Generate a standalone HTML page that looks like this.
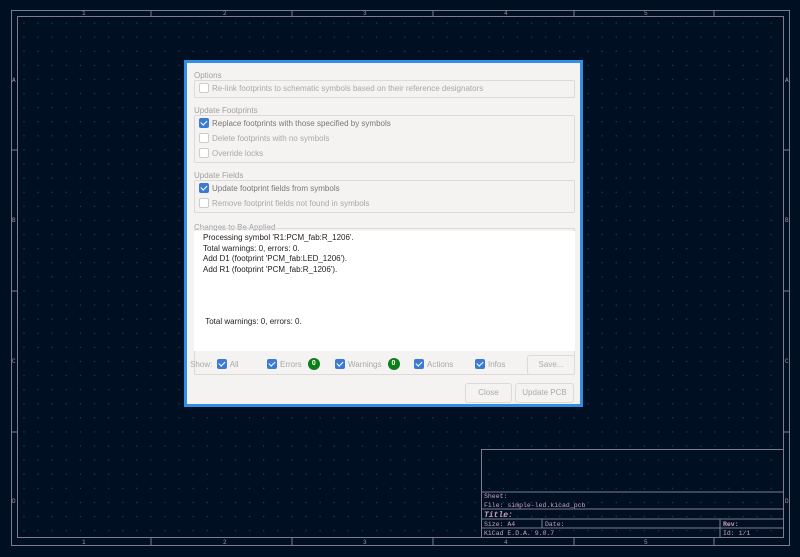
<!DOCTYPE html>
<html><head><meta charset="utf-8"><style>
body{margin:0;width:800px;height:557px;background:#001023;overflow:hidden;position:relative;font-family:"Liberation Sans",sans-serif}
svg{position:absolute;left:0;top:0}
#dlg{position:absolute;left:184px;top:60px;width:393px;height:341px;border:3px solid #3090e6;background:#f5f3f2;font-size:8px;color:#a8a8a8}
.gl{position:absolute;left:7px;font-size:8px;color:#a0a0a0}
.box{position:absolute;left:7px;width:379px;border:1px solid #dcd9d7;border-radius:2px}
.row{position:absolute;left:12px;height:10px;line-height:10px;white-space:nowrap}
.cb{display:inline-block;width:8px;height:8px;border:1px solid #ccc;border-radius:2px;background:#fff;vertical-align:-2px;margin-right:3px;position:relative}
.cb.on{background:#3b7bd4;border-color:#3b7bd4}
.cb.on:after{content:"";position:absolute;left:2px;top:0px;width:2.5px;height:5px;border:solid #fff;border-width:0 1.4px 1.4px 0;transform:rotate(45deg)}
.dark{color:#777}
#log{position:absolute;left:7px;top:168px;width:381px;height:120px;background:#fff;color:#222;font-size:8px;line-height:10.5px}
.badge{display:inline-block;width:12px;height:12px;border-radius:6px;background:#0d7d1a;color:#fff;text-align:center;line-height:12px;font-size:7px;font-weight:bold;vertical-align:top;margin-left:6px;position:relative;top:-1px}
.btn{position:absolute;border:1px solid #dcd9d7;border-radius:3px;background:#f5f3f2;text-align:center;color:#aaa}
</style></head><body>
<svg width="800" height="557">
<defs><pattern id="g" width="14.1" height="14.1" patternUnits="userSpaceOnUse" x="17" y="16"><circle cx="7" cy="7" r="0.6" fill="#3a4660"/></pattern></defs>
<rect x="17" y="16" width="767" height="522" fill="url(#g)"/>
<g stroke="#7e7a90" stroke-width="1" fill="none">
<rect x="11.5" y="10.5" width="778" height="535"/>
<rect x="17.5" y="16.5" width="766" height="521"/>
<path d="M151 10v6M292 10v6M433 10v6M574 10v6M714 10v6M151 538v7M292 538v7M433 538v7M574 538v7M714 538v7M11 150h6M11 291h6M11 432h6M784 150h6M784 291h6M784 432h6"/>
<rect x="481.5" y="449.5" width="302" height="88"/>
<path d="M481 492h303M481 509h303M481 519h303M481 528h303M542 519v9M720 519v18"/>
</g>
<g fill="#9a96a8" font-size="6" font-family="Liberation Mono">
<text x="82" y="15">1</text><text x="223" y="15">2</text><text x="363" y="15">3</text><text x="504" y="15">4</text><text x="644" y="15">5</text>
<text x="82" y="544">1</text><text x="223" y="544">2</text><text x="363" y="544">3</text><text x="504" y="544">4</text><text x="644" y="544">5</text>
<text x="12" y="82">A</text><text x="12" y="222">B</text><text x="12" y="363">C</text><text x="12" y="503">D</text>
<text x="785" y="82">A</text><text x="785" y="222">B</text><text x="785" y="363">C</text><text x="785" y="503">D</text>
</g>
<g fill="#c9a0c0" font-size="6.5" font-family="Liberation Mono">
<text x="484" y="498">Sheet:</text><text x="484" y="507">File: simple-led.kicad_pcb</text>
<text x="484" y="517" font-weight="bold" font-style="italic" font-size="8">Title:</text>
<text x="484" y="526">Size: A4</text><text x="545" y="526">Date:</text><text x="484" y="535">KiCad E.D.A. 9.0.7</text>
<text x="723" y="526" font-weight="bold">Rev:</text><text x="723" y="535">Id: 1/1</text>
</g>
</svg>
<div id="dlg">
<div class="gl" style="top:8px">Options</div>
<div class="box" style="top:17px;height:16px"></div>
<div class="row" style="top:20px"><span class="cb"></span>Re-link footprints to schematic symbols based on their reference designators</div>
<div class="gl" style="top:43px">Update Footprints</div>
<div class="box" style="top:52px;height:46px"></div>
<div class="row dark" style="top:55px"><span class="cb on"></span>Replace footprints with those specified by symbols</div>
<div class="row" style="top:70px"><span class="cb"></span>Delete footprints with no symbols</div>
<div class="row" style="top:85px"><span class="cb"></span>Override locks</div>
<div class="gl" style="top:108px">Update Fields</div>
<div class="box" style="top:117px;height:31px"></div>
<div class="row dark" style="top:120px"><span class="cb on"></span>Update footprint fields from symbols</div>
<div class="row" style="top:135px"><span class="cb"></span>Remove footprint fields not found in symbols</div>
<div class="gl" style="top:160px">Changes to Be Applied</div>
<div class="box" style="top:165px;height:145px"></div>
<div id="log"><div style="padding:2px 0 0 9px">Processing symbol 'R1:PCM_fab:R_1206'.<br>Total warnings: 0, errors: 0.<br>Add D1 (footprint 'PCM_fab:LED_1206').<br>Add R1 (footprint 'PCM_fab:R_1206').<br><br><br><br><br>&nbsp;Total warnings: 0, errors: 0.</div></div>
<div class="row" style="left:3px;top:296px;line-height:12px">Show:&nbsp; <span class="cb on"></span>All</div>
<div class="row" style="left:80px;top:296px;line-height:12px"><span class="cb on"></span>Errors<span class="badge">0</span></div>
<div class="row" style="left:148px;top:296px;line-height:12px"><span class="cb on"></span>Warnings<span class="badge">0</span></div>
<div class="row" style="left:227px;top:296px;line-height:12px"><span class="cb on"></span>Actions</div>
<div class="row" style="left:288px;top:296px;line-height:12px"><span class="cb on"></span>Infos</div>
<div class="btn" style="left:340px;top:292px;width:46px;height:18px;line-height:18px">Save...</div>
<div class="btn" style="left:278px;top:320px;width:45px;height:18px;line-height:18px">Close</div>
<div class="btn" style="left:328px;top:320px;width:57px;height:18px;line-height:18px">Update PCB</div>
</div>
</body></html>
